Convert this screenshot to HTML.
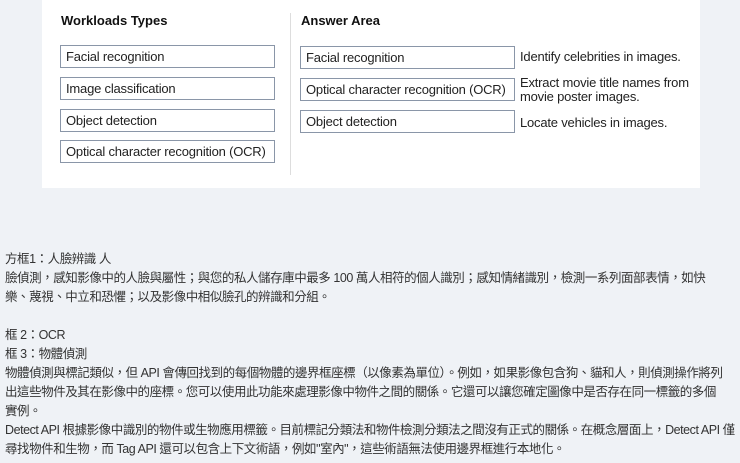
<!DOCTYPE html>
<html><head><meta charset="utf-8"><style>
body{margin:0;width:740px;height:463px;background:#eff2f6;font-family:"Liberation Sans","Noto Sans CJK TC",sans-serif;position:relative;overflow:hidden}
.img{position:absolute;left:42px;top:0;width:658px;height:188px;background:#fff}
.h{position:absolute;font-weight:bold;font-size:13px;color:#111;top:13px}
.b{position:absolute;border:1px solid #8a96a8;box-sizing:border-box;font-size:13px;line-height:22px;padding-left:5px;color:#222;width:215px;letter-spacing:-0.2px}
.l{position:absolute;font-size:13px;color:#222;left:520px;letter-spacing:-0.2px;line-height:14px}
.div{position:absolute;left:290px;top:13px;width:1px;height:162px;background:#ddd}
.t{position:absolute;left:5px;top:250px;font-size:12.5px;line-height:19px;color:#333;font-family:"Liberation Sans","Noto Sans CJK TC",sans-serif;width:740px;letter-spacing:-0.45px;white-space:nowrap}
</style></head><body>
<div class="img"></div>
<div class="h" style="left:61px">Workloads Types</div>
<div class="h" style="left:301px">Answer Area</div>
<div class="div"></div>
<div class="b" style="left:60px;top:45px;height:23px">Facial recognition</div>
<div class="b" style="left:60px;top:77px;height:23px">Image classification</div>
<div class="b" style="left:60px;top:109px;height:23px">Object detection</div>
<div class="b" style="left:60px;top:140px;height:23px">Optical character recognition (OCR)</div>
<div class="b" style="left:300px;top:46px;height:23px">Facial recognition</div>
<div class="b" style="left:300px;top:78px;height:23px">Optical character recognition (OCR)</div>
<div class="b" style="left:300px;top:110px;height:23px">Object detection</div>
<div class="l" style="top:50px">Identify celebrities in images.</div>
<div class="l" style="top:76px">Extract movie title names from<br>movie poster images.</div>
<div class="l" style="top:116px">Locate vehicles in images.</div>
<div class="t">方框1：人臉辨識 人<br>臉偵測，感知影像中的人臉與屬性；與您的私人儲存庫中最多 100 萬人相符的個人識別；感知情緒識別，檢測一系列面部表情，如快<br>樂、蔑視、中立和恐懼；以及影像中相似臉孔的辨識和分組。<br><br>框 2：OCR<br>框 3：物體偵測<br>物體偵測與標記類似，但 API 會傳回找到的每個物體的邊界框座標（以像素為單位）。例如，如果影像包含狗、貓和人，則偵測操作將列<br>出這些物件及其在影像中的座標。您可以使用此功能來處理影像中物件之間的關係。它還可以讓您確定圖像中是否存在同一標籤的多個<br>實例。<br>Detect API 根據影像中識別的物件或生物應用標籤。目前標記分類法和物件檢測分類法之間沒有正式的關係。在概念層面上，Detect API 僅<br>尋找物件和生物，而 Tag API 還可以包含上下文術語，例如"室內"，這些術語無法使用邊界框進行本地化。</div>
</body></html>
